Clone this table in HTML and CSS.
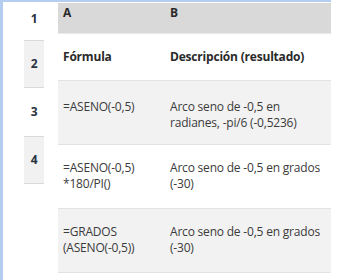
FILE: index.html
```html
<!DOCTYPE html>
<html lang="es">
<head>
<meta charset="utf-8">
<link rel="stylesheet" href="styles.css">
</head>
<body>
<div class="frame">
  <div class="rownums">
    <div class="rn rn-first">1</div>
    <div class="rn rn-alt">2</div>
    <div class="rn">3</div>
    <div class="rn rn-alt">4</div>
  </div>
  <div class="sheet">
    <div class="row head">
      <div class="cell col-a">A</div>
      <div class="cell col-b">B</div>
    </div>
    <div class="row titles">
      <div class="cell col-a">Fórmula</div>
      <div class="cell col-b">Descripción (resultado)</div>
    </div>
    <div class="row shaded first-data">
      <div class="cell col-a">=ASENO(-0,5)</div>
      <div class="cell col-b">Arco seno de -0,5 en radianes, -pi/6 (-0,5236)</div>
    </div>
    <div class="row">
      <div class="cell col-a">=ASENO(-0,5)<br>*180/PI()</div>
      <div class="cell col-b">Arco seno de -0,5 en grados (-30)</div>
    </div>
    <div class="row shaded">
      <div class="cell col-a">=GRADOS<br>(ASENO(-0,5))</div>
      <div class="cell col-b">Arco seno de -0,5 en grados (-30)</div>
    </div>
  </div>
</div>
</body>
</html>
```
FILE: styles.css
```css
html, body {
  margin: 0;
  padding: 0;
  background: #ffffff;
}
body {
  font-family: "Open Sans", "Noto Sans", sans-serif;
  font-size: 12px;
  line-height: 16px;
  letter-spacing: -0.2px;
  color: #3b3b3b;
  width: 337px;
  height: 280px;
  overflow: hidden;
}
.frame {
  display: flex;
  gap: 14px;
  width: 331px;
  height: 280px;
  box-sizing: border-box;
  border-top: 2px solid #b5cdf1;
  border-left: 3px solid #b5cdf1;
  padding-left: 21px;
}
.rownums {
  width: 20px;
  display: flex;
  flex-direction: column;
}
.rn {
  height: 48px;
  box-sizing: border-box;
  display: flex;
  align-items: center;
  justify-content: center;
  font-weight: 700;
  color: #2a3340;
}
.rn-first {
  height: 38px;
  align-items: flex-start;
  padding-top: 9px;
}
.rn-alt {
  background: #f1f1f1;
  border-top: 1px solid #dadada;
  border-bottom: 1px solid #dadada;
}
.sheet {
  margin-top: 1px;
  width: 273px;
  display: flex;
  flex-direction: column;
}
.row {
  display: flex;
  border-bottom: 1px solid #e2e2e2;
}
.cell {
  box-sizing: border-box;
  padding: 15px 5px 16px 5px;
}
.first-data .cell {
  padding: 18px 5px 13px 5px;
}
.col-a {
  width: 107px;
}
.col-b {
  width: 166px;
}
.head {
  background: #d9d9d9;
  border-bottom: 1px solid #e9e9e9;
  font-weight: 700;
  color: #2a2a2a;
}
.head .cell {
  padding: 2px 5px 12px 5px;
}
.titles .cell {
  padding: 15px 5px 15px 5px;
  font-weight: 700;
  color: #2a2a2a;
}
.shaded {
  background: #f2f2f2;
}
```
